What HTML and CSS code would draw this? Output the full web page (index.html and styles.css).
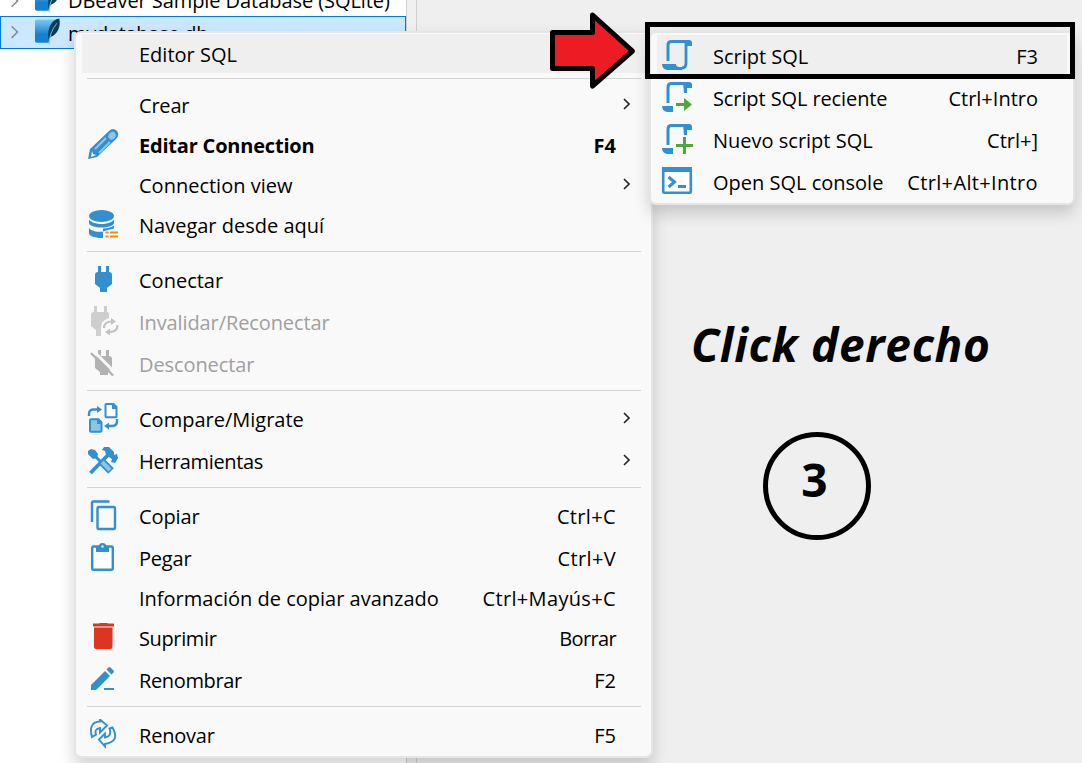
FILE: index.html
```
<!DOCTYPE html>
<html lang="es">
<head>
<meta charset="utf-8">
<title>Editor SQL</title>
<link rel="stylesheet" href="styles.css">
</head>
<body>
<div class="app">
  <aside class="tree">
    <div class="node">
      <svg class="node-icon" viewBox="0 0 70 33"><path class="chev" d="M12 12l6 6-6 6"/><path d="M38 5h21v9q-7 6-9 14H38q-2 0-2-2V7q0-2 2-2z" fill="url(#db)"/><path d="M50 26C48 15 53 4 61 3c2 8-2 17-9 19z" fill="#0b3d59"/><path d="M50.500 30q0-12 8-22" stroke="#8cb8d6" fill="none"/></svg>
      <span class="t-sample">DBeaver Sample Database (SQLite)</span>
    </div>
    <div class="node selected">
      <svg class="node-icon" viewBox="0 0 70 33"><defs><linearGradient id="db" x1="0" y1="0" x2="0" y2="1"><stop stop-color="#7ec8f2"/><stop offset=".65" stop-color="#1480d0"/></linearGradient></defs><path class="chev" d="M12 10l6 6-6 6"/><path d="M38 3h21v9q-7 6-9 15H38q-2 0-2-2V5q0-2 2-2z" fill="url(#db)"/><path d="M50 24C48 13 53 3 61 2c2 8-2 17-9 19z" fill="#0b3d59"/><path d="M50.500 29q0-12 8-22" stroke="#8cb8d6" fill="none"/></svg>
      <span class="t-mydb">mydatabase.db</span>
    </div>
  </aside>
  <div class="sash"></div>
  <main class="editor"></main>
</div>

<nav class="menu main-menu">
  <div class="row r39 active"><span class="label low">Editor SQL</span></div>
  <hr>
  <div class="row r39"><span class="label snug">Crear</span><svg class="arrow" viewBox="0 0 8 12"><path d="M1 1l5 5-5 5"/></svg></div>
  <div class="row r40 bold"><svg class="icon" viewBox="87 129 32 32"><path class="b" d="M88 159l2-10 19-18q4-4 8 0 3 4-1 8l-19 18z"/><path class="l" d="M109 134q3-4 6-1 2 3-1 6l-3 1-3-3z"/><path d="M95 149l11-11M99 153l11-11" stroke="#8cc5ea" stroke-width="2"/><path d="M92 151l1 3 3 1-5 2z" fill="#fff"/></svg><span class="label low snug">Editar Connection</span><kbd class="low">F4</kbd></div>
  <div class="row r40"><span class="label low">Connection view</span><svg class="arrow" viewBox="0 0 8 12"><path d="M1 1l5 5-5 5"/></svg></div>
  <div class="row r40 nav"><svg class="icon" viewBox="87 209 32 32"><ellipse class="b" cx="101.500" cy="216" rx="12.500" ry="6"/><path class="b" d="M89 219.500c4 6 21 6 25 0v3.500c0 2-4 4.500-12.500 4.500S89 225 89 223zM89 228c3 4 10 4 14 3.700v6.300c-8 0-14-1.500-14-5zM103 228.500q7 0 11-3v3l-8 2-3 1z"/><path d="M105.500 232.500h3m1.500 0h8M105.500 236.500h3m1.500 0h8" stroke="#fa8a0a" stroke-width="2.200"/></svg><span class="label low">Navegar desde aquí</span></div>
  <hr>
  <div class="row"><svg class="icon" viewBox="87 264 32 32"><path class="b" d="M98 266h3v6h5v-6h3v6q3 0 3 3v9l-5 4v4h-7v-4l-5-4v-9q0-3 3-3z"/></svg><span class="label low">Conectar</span></div>
  <div class="row disabled"><svg class="icon" viewBox="87 306 32 32"><path fill="#cecece" d="M94 306h3v6h7v-6h3v6q2 0 2 3v3q-8 2-8 10v8h-5v-6l-5-4v-11q0-3 3-3z"/><path d="M104 328q0-6.500 8-6.500M117.500 325q0 7-8 7" fill="none" stroke="#c2c2c2" stroke-width="2.200"/><path d="M111 318l5 3.500-5 3.500zM110 328.500l-5 3.500 5 3.500z" fill="#c2c2c2"/></svg><span class="label low tight">Invalidar/Reconectar</span></div>
  <div class="row disabled"><svg class="icon" viewBox="87 348 32 32"><path fill="#b2b2b2" d="M98 350h3v6h5v-6h3v6q3 0 3 3v9l-4 4v3h-8v-3l-5-4v-9q0-3 3-3z"/><path d="M94 351.500l20 20" stroke="#f9f9f9" stroke-width="3"/><path d="M91 353l22 22.500" stroke="#b2b2b2" stroke-width="2.400"/></svg><span class="label low tight">Desconectar</span></div>
  <hr>
  <div class="row"><svg class="icon" viewBox="87 403 32 32"><path d="M106 404h7.500l3 3v9.800q0 .5-1 .5h-9q-1 0-1-1V405q0-1 .5-1z" fill="#fff" stroke="#3290d0" stroke-width="2"/><path class="b" d="M112 404h2l3 3v2h-5z"/><path d="M91 419.300h7.500l3 3v8.500q0 1-1 1h-9.500q-1 0-1-1v-10.500q0-1 1-1z" fill="#8cc5ea" stroke="#3290d0" stroke-width="2"/><path class="b" d="M97 419h2l3 3v2h-5z"/><path class="s" d="M89 416v-2q0-4.500 5-4.500h4M117 419v2q0 5-5 5h-3"/><path class="b" d="M97 406l5 3.500-5 3.500zM109 422.500l-5 3.500 5 3.500z"/></svg><span class="label low">Compare/Migrate</span><svg class="arrow" viewBox="0 0 8 12"><path d="M1 1l5 5-5 5"/></svg></div>
  <div class="row"><svg class="icon" viewBox="87 445 32 32"><path d="M92 453l18 18" stroke="#3290d0" stroke-width="3"/><path d="M90.500 473L108 455" stroke="#3290d0" stroke-width="3.800"/><path class="b" d="M88 451l3-2 4 1 3 4-1 4-4 1-5-5zM102 450l2-3h5l5 5v3l3-1 1 4-3 5-4-1 1-3-6-4-1-4z"/><path d="M101 461l10 10" stroke="#3290d0" stroke-width="8"/><path d="M102 462l8 8" stroke="#8cc5ea" stroke-width="4"/></svg><span class="label low snugger">Herramientas</span><svg class="arrow" viewBox="0 0 8 12"><path d="M1 1l5 5-5 5"/></svg></div>
  <hr>
  <div class="row"><svg class="icon" viewBox="87 500 32 32"><path class="s" d="M92 522v-19q0-1.500 1.500-1.500H109.500"/><rect class="s" x="97.500" y="507" width="17.500" height="22" rx="1.500"/></svg><span class="label low tight">Copiar</span><kbd class="low wide">Ctrl+C</kbd></div>
  <div class="row"><svg class="icon" viewBox="87 542 32 32"><rect x="92.200" y="546.500" width="20.600" height="23.200" rx="1.500" fill="#fff" stroke="#3290d0" stroke-width="2.400"/><path class="b" d="M96 546h3q0-3 3.500-3t3.500 3h3v6H96z"/><circle cx="102.500" cy="546.500" r="1.200" fill="#d9eefb"/></svg><span class="label low snug">Pegar</span><kbd class="low wide">Ctrl+V</kbd></div>
  <div class="row r40"><span class="label">Información de copiar avanzado</span><kbd class="wide">Ctrl+Mayús+C</kbd></div>
  <div class="row r40"><svg class="icon" viewBox="87 624 32 32"><path fill="#dc3522" d="M93 624.500h6l1-.5h7l1 .5h6v3H93zM94 628.500h18.500V648q0 2-2 2H96q-2 0-2-2z"/></svg><span class="label snugger">Suprimir</span><kbd class="snuggest">Borrar</kbd></div>
  <div class="row"><svg class="icon" viewBox="87 664 32 32"><path class="b" d="M91 685l14-14 5 5-14 14h-5zM106.500 669.500l2-2q1-1 2 0l3 3q1 1 0 2l-2 2zM104 688h10v2h-10z"/></svg><span class="label low snugger">Renombrar</span><kbd class="low">F2</kbd></div>
  <hr>
  <div class="row"><svg class="icon" viewBox="87 719 32 32"><path class="s thin" d="M92 737q-4-15 8-15.500v-2l7 6-7 7v-4.500q-6 1-4 6.500zM109.500 728.500l3-1q8 14-7.500 16.500v2.500l-6-7 6-6v4q7-1 4.500-9z"/></svg><span class="label low snug">Renovar</span><kbd class="low">F5</kbd></div>
</nav>

<nav class="menu sub-menu">
  <div class="row active"><svg class="icon" viewBox="661 40 32 32"><path d="M668 61V45q0-3.500 3.500-3.500H688" fill="none" stroke="#3290d0" stroke-width="3"/><path d="M686 42v21q0 5-4 5" fill="none" stroke="#3290d0" stroke-width="2.800"/><path class="b" d="M685 40h4q3 0 3 3v3h-6zM662 64h14q0 3 3.500 3h2.500v3h-15q-5-1-5-6z"/></svg><span class="label low">Script SQL</span><kbd class="low">F3</kbd></div>
  <div class="row"><svg class="icon" viewBox="661 82 32 32"><path d="M668 103V87q0-3.500 3.500-3.500H688" fill="none" stroke="#3290d0" stroke-width="3"/><path class="b" d="M683 82h6q3 0 3 3v3h-5v5h-3zM662 106h11v6h-6q-5-1-5-6z"/><path class="g" d="M676 103h8v-5l8 6.500-8 6.500v-5h-8z"/></svg><span class="label low tight">Script SQL reciente</span><kbd class="low">Ctrl+Intro</kbd></div>
  <div class="row"><svg class="icon" viewBox="661 124 32 32"><path d="M668 145v-16q0-3.500 3.500-3.500H688" fill="none" stroke="#3290d0" stroke-width="3"/><path class="b" d="M683 124h6q3 0 3 3v3h-5v5h-3zM662 148h11v6h-6q-5-1-5-6z"/><path class="g" d="M683 137h3v7h7v3h-7v7h-3v-7h-7v-3h7z"/></svg><span class="label low">Nuevo script SQL</span><kbd class="low">Ctrl+]</kbd></div>
  <div class="row"><svg class="icon" viewBox="661 166 32 32"><rect x="663.200" y="168.200" width="27.600" height="24.600" rx="1" fill="#fff" stroke="#3290d0" stroke-width="2.600"/><path class="b" d="M662 167h30v5h-30z"/><path d="M668.500 177l6 5-6 5" fill="none" stroke="#3290d0" stroke-width="3"/><path class="b" d="M678 185h8v3h-8z"/></svg><span class="label low">Open SQL console</span><kbd class="low wide">Ctrl+Alt+Intro</kbd></div>
</nav>

<svg class="big-arrow" viewBox="548 10 90 82"><path d="M552.500 32.500h40V15l40 36-40 35V68.500h-40z" fill="#ed1c24" stroke="#000" stroke-width="5" stroke-linejoin="round"/></svg>
<div class="frame"></div>
<div class="caption">Click derecho</div>
<div class="step"><span>3</span></div>
</body>
</html>
```
FILE: styles.css
```
* { box-sizing: border-box; }
body {
  margin: 0;
  width: 1082px;
  height: 763px;
  overflow: hidden;
  position: relative;
  background: #efefef;
  color: #000;
  font: 20px/28px "Open Sans", "Noto Sans", sans-serif;
}
.app { display: flex; height: 763px; }
.tree { width: 406px; background: #fff; }
.sash { width: 11px; background: #f0f0f0; border: solid #cfcfcf; border-width: 0 1px; }
.editor { flex: 1; background: #efefef; }
.node { display: flex; height: 33px; align-items: center; white-space: nowrap; }
.node:first-child { margin-top: -17px; }
.selected { background: #cce8ff; outline: 1px solid #0078d7; outline-offset: -1px; }
.node-icon { width: 68px; height: 33px; flex: none; }
.chev { fill: none; stroke: #8a8a8a; stroke-width: 1.6; }
.t-sample { letter-spacing: -.07px; padding-top: 2px; }
.t-mydb { letter-spacing: -.3px; padding-top: 2px; }

.menu {
  position: absolute;
  background: #f9f9f9;
  border: 2px solid #e5e5e5;
  border-radius: 7px;
  box-shadow: 0 8px 16px rgba(0, 0, 0, .18);
}
.main-menu { left: 74px; top: 31px; width: 579px; height: 727px; padding: 1px 0; }
.sub-menu { left: 649px; top: 31px; width: 426px; height: 174px; padding: 2px 0; }
.menu hr { height: 1px; margin: 5px 10px 7px 11px; border: 0; background: #d4d4d4; }
.row {
  display: flex;
  align-items: center;
  height: 42px;
  padding: 0 35px 0 63px;
  white-space: nowrap;
}
.sub-menu .row { padding-left: 62px; }
.r39 { height: 39px; }
.r40 { height: 40px; }
.nav { margin-bottom: 6px; }
.icon { width: 32px; height: 32px; flex: none; margin-left: -52px; margin-right: 20px; }
.label { flex: 1; }
.low { padding-top: 2px; }
.menu kbd { font: inherit; }
.tight { letter-spacing: -.1px; }
.snug { letter-spacing: -.2px; }
.snugger { letter-spacing: -.37px; }
.snuggest { letter-spacing: -.65px; }
.menu .wide { letter-spacing: .35px; }
.arrow { width: 8px; height: 12px; margin-right: -15px; margin-top: -3px; }
.arrow path { fill: none; stroke: #222; stroke-width: 1.6; }
.active { background: linear-gradient(#efefef, #efefef) 6px 0 / calc(100% - 12px) 100% no-repeat; }
.disabled { color: #a0a0a0; }
.bold { font-weight: 700; }
.b { fill: #3290d0; }
.l { fill: #8cc5ea; }
.g { fill: #4fa83d; }
.s { fill: none; stroke: #3290d0; stroke-width: 2.4; }
.thin { stroke-width: 1.9; }

.big-arrow { position: absolute; left: 548px; top: 10px; width: 90px; height: 82px; }
.frame { position: absolute; left: 645px; top: 22px; width: 430px; height: 57px; border: 5px solid #000; }
.caption {
  position: absolute;
  left: 691px;
  top: 313px;
  font: italic 700 46px/62px "Open Sans", sans-serif;
  letter-spacing: .7px;
  white-space: nowrap;
}
.step {
  position: absolute;
  left: 763px;
  top: 432px;
  width: 108px;
  height: 108px;
  border: 5px solid #000;
  border-radius: 50%;
  display: flex;
  justify-content: center;
  padding: 11px 5px 0 0;
  font: 700 46px/62px "Open Sans", sans-serif;
}
```
